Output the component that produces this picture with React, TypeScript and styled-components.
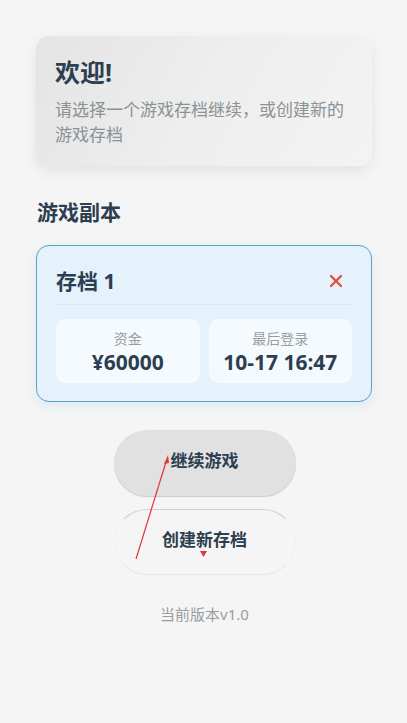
import { FC } from 'react'
import styled, { createGlobalStyle } from 'styled-components'

const GlobalStyle = createGlobalStyle`
  html, body {
    margin: 0;
    padding: 0;
    background: #f5f5f5;
  }
  body {
    font-family: 'Noto Sans', 'Noto Sans CJK SC', sans-serif;
    color: #2c3e50;
  }
  * {
    box-sizing: border-box;
  }
`

const saves = [{ id: 1, name: '存档 1', money: '¥60000', lastLogin: '10-17 16:47' }]

const App: FC = () => {
  return (
    <>
      <GlobalStyle />
      <Page>
        <WelcomeCard>
          <WelcomeTitle>欢迎!</WelcomeTitle>
          <WelcomeText>请选择一个游戏存档继续，或创建新的游戏存档</WelcomeText>
        </WelcomeCard>

        <SectionTitle>游戏副本</SectionTitle>

        {saves.map((save) => (
          <SaveCard key={save.id}>
            <SaveHeader>
              <SaveName>{save.name}</SaveName>
              <DeleteButton aria-label="删除">
                <svg width="14" height="14" viewBox="0 0 14 14">
                  <path d="M2 2 L12 12 M12 2 L2 12" stroke="#dc4c3f" strokeWidth="2.2" strokeLinecap="round" />
                </svg>
              </DeleteButton>
            </SaveHeader>
            <StatGrid>
              <StatBox>
                <StatLabel>资金</StatLabel>
                <StatValue>{save.money}</StatValue>
              </StatBox>
              <StatBox>
                <StatLabel>最后登录</StatLabel>
                <StatValue>{save.lastLogin}</StatValue>
              </StatBox>
            </StatGrid>
          </SaveCard>
        ))}

        <Actions>
          <PillButton $variant="filled">继续游戏</PillButton>
          <PillButton $variant="outline">创建新存档</PillButton>
        </Actions>

        <Version>当前版本v1.0</Version>
      </Page>

      <Annotation width="407" height="723" viewBox="0 0 407 723">
        <line x1="136" y1="559" x2="166" y2="462" stroke="#e0353a" strokeWidth="1.2" />
        <path d="M168 455 L164 464 L169 463 Z" fill="#e0353a" />
        <path d="M200 551 L207 551 L203.5 557 Z" fill="#e0353a" />
      </Annotation>
    </>
  )
}

const Page = styled.div`
  display: flex;
  flex-direction: column;
  padding: 36px 35px 60px 36px;
  min-height: 723px;
`

const WelcomeCard = styled.div`
  display: flex;
  flex-direction: column;
  padding: 21px 19px 19px;
  border-radius: 13px;
  background: linear-gradient(120deg, #e4e4e4 0%, #eeeeee 50%, #f3f3f3 100%);
  box-shadow: 0 5px 14px rgba(0, 0, 0, 0.08);
`

const WelcomeTitle = styled.div`
  font-size: 25px;
  font-weight: 700;
  line-height: 30px;
  color: #2c3e50;
  margin-bottom: 10px;
`

const WelcomeText = styled.div`
  font-size: 17px;
  line-height: 25px;
  color: #8a9296;
`

const SectionTitle = styled.div`
  margin-top: 32px;
  margin-bottom: 19px;
  font-size: 21px;
  font-weight: 700;
  line-height: 28px;
  padding-left: 1px;
  color: #2c3e50;
`

const SaveCard = styled.div`
  display: flex;
  flex-direction: column;
  padding: 0 19px 18px;
  border: 1px solid #5a9fc4;
  border-radius: 13px;
  background: #e5f2fc;
  box-shadow: 0 4px 12px rgba(52, 152, 219, 0.12);
`

const SaveHeader = styled.div`
  display: flex;
  align-items: center;
  justify-content: space-between;
  padding: 21px 0 9px;
  margin-bottom: 14px;
  border-bottom: 1px solid #dbe7f0;
`

const SaveName = styled.div`
  font-size: 21px;
  font-weight: 700;
  line-height: 28px;
  color: #2c3e50;
`

const DeleteButton = styled.button`
  display: flex;
  align-items: center;
  justify-content: center;
  width: 26px;
  height: 26px;
  margin-right: 3px;
  padding: 0;
  border: none;
  background: transparent;
  cursor: pointer;
`

const StatGrid = styled.div`
  display: grid;
  grid-template-columns: 1fr 1fr;
  gap: 9px;
`

const StatBox = styled.div`
  display: flex;
  flex-direction: column;
  align-items: center;
  padding: 10px 0 8px;
  border-radius: 9px;
  background: rgba(255, 255, 255, 0.62);
`

const StatLabel = styled.div`
  font-size: 14px;
  line-height: 20px;
  color: #999d9f;
`

const StatValue = styled.div`
  font-size: 21px;
  font-weight: 700;
  line-height: 26px;
  color: #2c3e50;
`

const Actions = styled.div`
  display: flex;
  flex-direction: column;
  align-items: center;
  gap: 13px;
  margin-top: 28px;
  padding-left: 1px;
`

const PillButton = styled.button<{ $variant: 'filled' | 'outline' }>`
  width: 182px;
  height: 66px;
  padding: 0 0 7px;
  border-radius: 33px;
  font-family: 'Noto Sans', 'Noto Sans CJK SC', sans-serif;
  font-size: 17px;
  font-weight: 700;
  color: #2c3e50;
  cursor: pointer;
  border: ${(p) => (p.$variant === 'filled' ? 'none' : '1px solid #f0f0f0')};
  border-top-color: ${(p) => (p.$variant === 'filled' ? 'transparent' : '#d0d0d0')};
  border-bottom-color: ${(p) => (p.$variant === 'filled' ? 'transparent' : '#e6e6e6')};
  background: ${(p) => (p.$variant === 'filled' ? '#e1e1e1' : 'transparent')};
  box-shadow: ${(p) => (p.$variant === 'filled' ? '0 1px 1px rgba(0, 0, 0, 0.18)' : 'none')};
`

const Version = styled.div`
  margin-top: 29px;
  text-align: center;
  font-size: 15px;
  line-height: 20px;
  color: #999d9f;
  padding-left: 1px;
`

const Annotation = styled.svg`
  position: absolute;
  top: 0;
  left: 0;
  pointer-events: none;
`

export default App
